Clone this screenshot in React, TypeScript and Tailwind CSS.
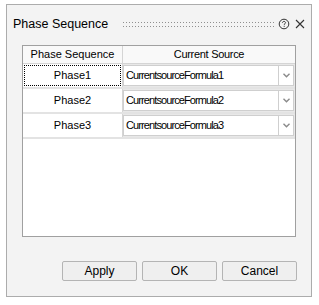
import React from 'react'

const FONT = { fontFamily: '"Liberation Sans", Arial, sans-serif' }

const rows = [
  { phase: 'Phase1', source: 'CurrentsourceFormula1', focus: true },
  { phase: 'Phase2', source: 'CurrentsourceFormula2' },
  { phase: 'Phase3', source: 'CurrentsourceFormula3' },
]

function Grip() {
  return (
    <svg width="151" height="6" className="block">
      <defs>
        <pattern id="dots" width="3" height="4" patternUnits="userSpaceOnUse">
          <rect x="0" y="0" width="1" height="1" fill="#8f8f8f" />
        </pattern>
      </defs>
      <rect x="0" y="0" width="151" height="6" fill="url(#dots)" />
    </svg>
  )
}

function HelpIcon() {
  return (
    <svg width="12" height="12" viewBox="0 0 12 12" className="block">
      <circle cx="6" cy="6" r="4.8" fill="none" stroke="#333" strokeWidth="1" />
      <path
        d="M4.5 4.8 C4.5 3.9 5.2 3.4 6 3.4 C6.8 3.4 7.5 3.9 7.5 4.7 C7.5 5.6 6.2 5.7 6.2 6.8"
        fill="none"
        stroke="#333"
        strokeWidth="1"
      />
      <rect x="5.7" y="7.8" width="1" height="1" fill="#333" />
    </svg>
  )
}

function CloseIcon() {
  return (
    <svg width="10" height="10" viewBox="0 0 10 10" className="block">
      <path d="M1 1 L9 9 M9 1 L1 9" stroke="#333" strokeWidth="1.1" />
    </svg>
  )
}

function Chevron() {
  return (
    <svg width="7" height="5" viewBox="0 0 7 5" className="block">
      <path d="M0.5 0.8 L3.5 3.8 L6.5 0.8" fill="none" stroke="#8a8a8a" strokeWidth="1.4" />
    </svg>
  )
}

function Btn({ label }: { label: string }) {
  return (
    <button className="flex h-[20px] w-[75px] items-center justify-center rounded-[2px] border border-[#b4b4b4] bg-[#efefef] text-[12px] text-black">
      {label}
    </button>
  )
}

export default function App() {
  return (
    <div className="h-[305px] w-[319px] bg-white pl-[6px] pt-[4px]" style={FONT}>
      <div className="flex h-[293px] w-[306px] flex-col border border-[#acacac] bg-[#f3f3f3]">
        {/* title bar */}
        <div className="flex h-[38px] items-center whitespace-nowrap pl-[6px] pr-[8px]">
          <span className="shrink-0 text-[12.5px] text-black">Phase Sequence</span>
          <div className="ml-[15px] mt-[2px] shrink-0">
            <Grip />
          </div>
          <div className="ml-[4px] shrink-0">
            <HelpIcon />
          </div>
          <div className="ml-[5px] shrink-0">
            <CloseIcon />
          </div>
        </div>

        {/* grid */}
        <div className="ml-[15px] mt-[2px] flex h-[192px] w-[274px] flex-col border border-[#a0a0a0] bg-white text-[11px] text-black">
          <div className="flex h-[18px] border-b border-[#d5d5d5] bg-[#f9f9f9]">
            <div className="flex w-[100px] items-center justify-center border-r border-[#d5d5d5]">
              Phase Sequence
            </div>
            <div className="flex flex-1 items-center justify-center tracking-[-0.3px]">
              Current Source
            </div>
          </div>
          {rows.map((r) => (
            <div key={r.phase} className="flex h-[25px] border-b-2 border-[#e3e3e3]">
              <div className="flex w-[100px] items-center justify-center border-r border-[#d5d5d5] p-[1px]">
                <div
                  className={
                    'flex h-full w-full items-center justify-center ' +
                    (r.focus ? 'border border-dotted border-black' : '')
                  }
                >
                  {r.phase}
                </div>
              </div>
              <div className="flex flex-1 items-stretch bg-[#e8e8e8] py-[1px] pr-[1px]">
                <div className="flex flex-1 items-center border border-[#cfcfcf] bg-white">
                  <span className="flex-1 pl-[2px] tracking-[-0.9px]">{r.source}</span>
                  <div className="flex h-full w-[15px] items-center justify-center border-l border-[#cfcfcf]">
                    <Chevron />
                  </div>
                </div>
              </div>
            </div>
          ))}
        </div>

        {/* buttons */}
        <div className="mt-[24px] flex justify-end gap-[5px] pr-[14px]">
          <Btn label="Apply" />
          <Btn label="OK" />
          <Btn label="Cancel" />
        </div>
      </div>
    </div>
  )
}
